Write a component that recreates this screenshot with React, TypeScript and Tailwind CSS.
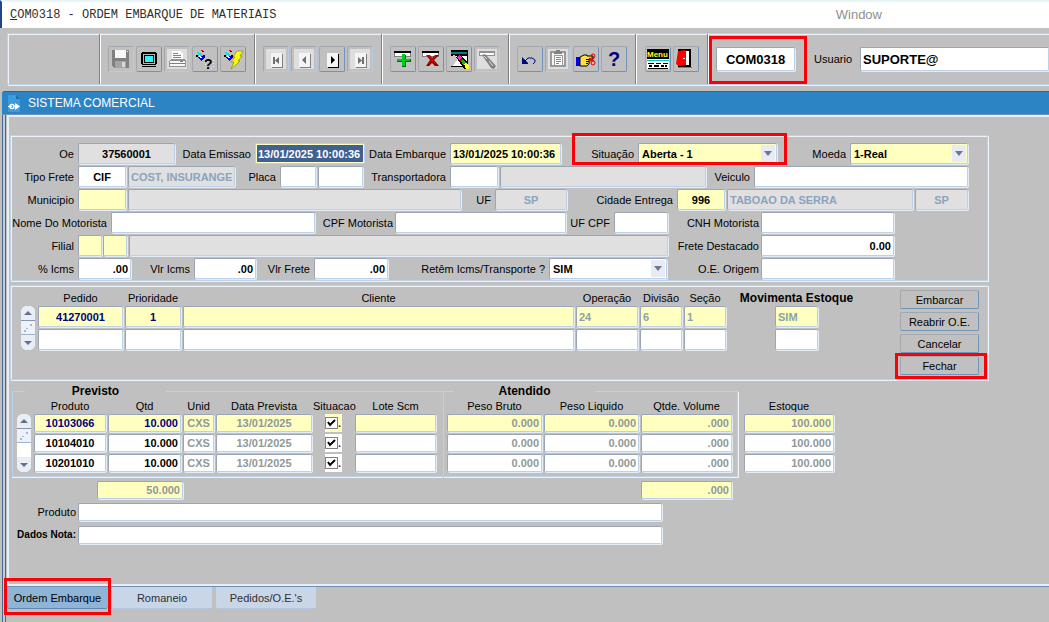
import { InputHTMLAttributes, ReactNode } from 'react';
import clsx from 'clsx';

const FIELD_BORDER =
  'border border-t-[#9ba5b3] border-l-[#9ba5b3] border-r-[#bcd0e8] border-b-[#bcd0e8] rounded-[2px] shadow-[1px_1px_0_#e4edf7]';

const PANEL_BORDER = 'border border-[#bcd0e8] shadow-[inset_1px_1px_0_#edf3fa,1px_1px_0_#edf3fa]';

type Tone = 'white' | 'yellow' | 'gray';

const tones: Record<Tone, string> = {
  white: 'bg-white',
  yellow: 'bg-[#ffffc0]',
  gray: 'bg-[#e0e0e0]',
};

interface FieldProps extends InputHTMLAttributes<HTMLInputElement> {
  tone?: Tone;
  short?: boolean;
}

function Field({ tone = 'white', short, className, ...props }: FieldProps) {
  return (
    <input
      type="text"
      className={clsx(
        'min-w-0 px-[2px] font-bold outline-none',
        short ? 'h-[18px]' : 'h-[21px]',
        FIELD_BORDER,
        tones[tone],
        className,
      )}
      {...props}
    />
  );
}

function Label({ htmlFor, className, children }: { htmlFor: string; className: string; children: ReactNode }) {
  return (
    <label htmlFor={htmlFor} className={clsx('shrink-0 pr-1 text-right whitespace-nowrap', className)}>
      {children}
    </label>
  );
}

interface SelectProps {
  id: string;
  options: string[];
  tone?: Tone;
  className: string;
}

function Select({ id, options, tone = 'white', className }: SelectProps) {
  return (
    <div className={clsx('relative shrink-0', className)}>
      <select
        id={id}
        className={clsx('h-[21px] w-full appearance-none px-[3px] font-bold outline-none', FIELD_BORDER, tones[tone])}
      >
        {options.map((option) => (
          <option key={option}>{option}</option>
        ))}
      </select>
      <span className="pointer-events-none absolute top-[2px] right-[2px] bottom-[2px] flex w-[14px] items-center justify-center bg-[#e8ebf4]">
        <svg width="8" height="5" viewBox="0 0 8 5">
          <path d="M0 0h8L4 5z" fill="#6b7894" />
        </svg>
      </span>
    </div>
  );
}

// Red frame that marks a control for the reader
function Highlight({ className }: { className: string }) {
  return <span className={clsx('pointer-events-none absolute z-10 border-[3px] border-[#fb0007]', className)} />;
}

function Scroller({ label, className }: { label: string; className: string }) {
  return (
    <div className={clsx('flex w-[14px] shrink-0 flex-col overflow-hidden rounded-[6px] bg-white', className)}>
      <button aria-label={`${label}: anterior`} className="flex h-[15px] items-center justify-center border-b border-[#8795a8] bg-[#e8eef6]">
        <svg width="8" height="4" viewBox="0 0 8 4">
          <path d="M4 0l4 4H0z" fill="#6b6f85" />
        </svg>
      </button>
      <span className="flex h-[14px] items-center justify-center border-b border-[#9fb2c8] bg-[#eef2f8]">
        <svg width="10" height="10" viewBox="0 0 10 10">
          <path d="M1 7h2v2H1zM3 5h2v1H3zM7 1h2v2H7z" fill="#9fb9d6" />
        </svg>
      </span>
      <button aria-label={`${label}: proximo`} className="mt-auto flex h-[15px] items-center justify-center bg-[#e8eef6]">
        <svg width="8" height="4" viewBox="0 0 8 4">
          <path d="M0 0h8L4 4z" fill="#6b6f85" />
        </svg>
      </button>
    </div>
  );
}

function ToolButton({ label, disabled, children }: { label: string; disabled?: boolean; children: ReactNode }) {
  return (
    <button
      aria-label={label}
      title={label}
      className={clsx(
        'h-[26px] w-[26px] shrink-0 rounded-[2px] border border-t-[#a4a7ab] border-l-[#a4a7ab]',
        disabled ? 'border-r-[#b8cbe2] border-b-[#b8cbe2]' : 'border-r-[#6f93b9] border-b-[#6f93b9]',
      )}
    >
      <svg width="24" height="24" viewBox="0 0 24 24" shapeRendering="crispEdges">
        {children}
      </svg>
    </button>
  );
}

function ToolGroup({ className, children }: { className: string; children?: ReactNode }) {
  return (
    <div
      className={clsx(
        'mr-px flex shrink-0 items-center gap-[2px] border-r border-r-[#808080] shadow-[1px_0_0_#fff]',
        className,
      )}
    >
      {children}
    </div>
  );
}

function Page({ glyph, disabled }: { glyph: string; disabled?: boolean }) {
  return (
    <>
      {disabled && <rect x="2" y="2" width="20" height="20" fill="#dedede" />}
      <path d="M8 7h11v14H8z" fill={disabled ? '#808080' : '#000'} />
      <path d="M7 6h11v14H7z" fill="#f4f4f4" />
      <path d={glyph} fill={disabled ? '#707070' : '#000'} shapeRendering="auto" />
    </>
  );
}

function List() {
  return (
    <>
      <path d="M3 4h17v6H3z" fill="#808080" />
      <path d="M3 4h17v2H3z" fill="#000" />
      <path d="M4 6h15v3H4z" fill="#fff" />
    </>
  );
}

function Flashlight() {
  return (
    <>
      <path d="M4 5l3 1 3 3-4 1z" fill="#00e5e5" />
      <path d="M5 10l6-2 1 3-4 3z" fill="#0000ff" />
      <path d="M9 4h2v1H9zM3 8h2v2H3z" fill="#000" />
      <path d="M8 3h2v1H8z" fill="#f00" />
      <path d="M10 8h2v3h-2z" fill="#000080" />
      <path d="M6 8h1v1h1v1h1v1H7v-1H6z" fill="#fff" />
    </>
  );
}

const pedidos = [
  { pedido: '41270001', prioridade: '1', operacao: '24', divisao: '6', secao: '1', estoque: 'SIM' },
  { pedido: '', prioridade: '', operacao: '', divisao: '', secao: '', estoque: '' },
];

const produtos = ['10103066', '10104010', '10201010'];

const acoes = ['Embarcar', 'Reabrir O.E.', 'Cancelar', 'Fechar'];

const rowTone = (index: number): Tone => (index === 0 ? 'yellow' : 'white');

function Toolbar() {
  return (
    <div className={clsx('ml-[5px] flex h-[52px] items-stretch border-r-0', PANEL_BORDER)}>
      <ToolGroup className="w-[92px]" />
      <ToolGroup className="pr-2 pl-[7px]">
        <ToolButton label="Salvar" disabled>
          <path d="M3 3h17v18H5l-2-2z" fill="#808080" />
          <path d="M6 3h11v8H6z" fill="#f8f8f8" />
          <path d="M18 4h1v1h-1z" fill="#fff" />
          <path d="M6 14h11v7H6z" fill="#a4a4a4" />
          <path d="M13 15h3v5h-3z" fill="#d8d8d8" />
        </ToolButton>
        <ToolButton label="Imprimir tela">
          <path d="M5 5h14v1h1v11h-1v1H5v-1H4V6h1z" fill="#000" />
          <path d="M6 7h12v10H6z" fill="#b8b8b8" />
          <path d="M7 8h10v8H7z" fill="#000" />
          <path d="M8 9h8v6H8z" fill="#35f0f0" />
          <path d="M5 19h14v1H5z" fill="#000" />
        </ToolButton>
        <ToolButton label="Imprimir" disabled>
          <rect x="2" y="2" width="20" height="20" fill="#dedede" />
          <path d="M7 4h8l3 3v6H7z" fill="#fff" />
          <path d="M8 6h5v1H8zM8 8h8v1H8zM8 10h8v1H8z" fill="#808080" />
          <path d="M4 14l2-2h13l2 2v6H4z" fill="#909090" />
          <path d="M5 14h15v5H5z" fill="#f8f8f8" />
          <path d="M5 16h15v1H5zM15 14h3v1h-3z" fill="#808080" />
        </ToolButton>
        <ToolButton label="Entrar consulta">
          <path
            d="M14 14h1v1h-1zM17 12h1v1h-1zM20 13h1v1h-1zM20 16h1v1h-1zM12 17h1v1h-1zM20 19h1v1h-1zM13 20h1v1h-1zM18 21h1v1h-1zM11 14h1v1h-1z"
            fill="#ffff00"
          />
          <Flashlight />
          <text x="11" y="22" fontSize="14" fontWeight="bold" fontFamily="Liberation Sans, sans-serif">
            ?
          </text>
        </ToolButton>
        <ToolButton label="Executar consulta">
          <Flashlight />
          <path d="M16 4h6l-3 5h2l-4 5h2l-9 8 3-7h-3l4-5h-2z" fill="#ffff00" stroke="#777700" strokeWidth="0.6" shapeRendering="auto" />
        </ToolButton>
      </ToolGroup>
      <ToolGroup className="pr-2 pl-[7px]">
        <ToolButton label="Primeiro registro" disabled>
          <Page disabled glyph="M9 10h2v7H9zM15 10v7l-4-3.500z" />
        </ToolButton>
        <ToolButton label="Registro anterior" disabled>
          <Page disabled glyph="M14 9v8l-4-4z" />
        </ToolButton>
        <ToolButton label="Proximo registro">
          <Page glyph="M11 9v8l4-4z" />
        </ToolButton>
        <ToolButton label="Ultimo registro" disabled>
          <Page disabled glyph="M14 10h2v7h-2zM10 10v7l4-3.500z" />
        </ToolButton>
      </ToolGroup>
      <ToolGroup className="pr-2 pl-[7px]">
        <ToolButton label="Inserir registro">
          <List />
          <path d="M11 8h4v4h5v3h-5v5h-4v-5H6v-3h5z" fill="#006400" />
          <path d="M11 7h3v5h5v2h-5v5h-3v-5H6v-2h5z" fill="#00c81e" />
        </ToolButton>
        <ToolButton label="Excluir registro">
          <List />
          <path d="M7 8h4l2 3 3-3h4l-5 5 5 6h-4l-3-3-3 3H7l4-6z" fill="#7a0000" shapeRendering="auto" />
          <path d="M8 8h2l3 4 4-4h1l-4 5 4 5h-1l-4-4-4 4H8l4-5z" fill="#e00000" shapeRendering="auto" />
        </ToolButton>
        <ToolButton label="Limpar registro">
          <path d="M4 3h17v17H4z" fill="#000" />
          <path d="M4 5h16v2H4z" fill="#008080" />
          <path d="M4 9h16v10H4z" fill="#fff" />
          <path d="M3 9l5-1 3 4-5 7H3z" fill="#c8c8c8" />
          <path d="M9 10l4-3 8 9v6h-4z" fill="#000" />
          <path d="M10 10l3-2 2 3-3 2z" fill="#f030c0" />
          <path d="M12 13l2-2 2 2-2 2z" fill="#e00000" />
          <path d="M14 14l2-2 3 4-3 2z" fill="#00c000" />
          <path d="M17 17l2-1 3 2v4h-3z" fill="#ffff20" />
        </ToolButton>
        <ToolButton label="Cancelar consulta" disabled>
          <rect x="2" y="2" width="20" height="20" fill="#dedede" />
          <path d="M4 4h16v5H4z" fill="#909090" />
          <path d="M5 6h14v2H5z" fill="#fff" />
          <path d="M7 8l3-1 11 12-2 3-3-1z" fill="#808080" shapeRendering="auto" />
          <path d="M9 9l3 3M14 14l4 5" stroke="#e4e4e4" fill="none" shapeRendering="auto" />
        </ToolButton>
      </ToolGroup>
      <ToolGroup className="pr-2 pl-[7px]">
        <ToolButton label="Desfazer">
          <path d="M4 10l6 6v1H4z" fill="#000080" shapeRendering="auto" />
          <path d="M7 14l3-3h4l3 2v2l-2 2" fill="none" stroke="#000080" shapeRendering="auto" />
        </ToolButton>
        <ToolButton label="Colar" disabled>
          <rect x="2" y="2" width="20" height="20" fill="#dedede" />
          <path d="M5 5h14v14H5z" fill="#f4f4f4" stroke="#808080" strokeWidth="1.500" shapeRendering="auto" />
          <path d="M8 5h2V3h4v2h2v2H8z" fill="#808080" />
          <path d="M8 8h8v10H8z" fill="#fff" stroke="#999" />
          <path d="M10 10h5v1h-5zM10 12h5v1h-5zM10 14h5v1h-5zM10 16h3v1h-3z" fill="#808080" />
        </ToolButton>
        <ToolButton label="Recortar">
          <path d="M2 10h4v9H2z" fill="#0000e0" />
          <path d="M6 10l4-2h3v1h6v3h-4v5l-2 2H6z" fill="#ffe04a" stroke="#000" shapeRendering="auto" />
          <path d="M12 12h3M12 14h3M12 16h2" stroke="#000" />
          <path d="M15 11l5 3M15 15l5-4" stroke="#e00000" strokeWidth="1.200" shapeRendering="auto" />
          <circle cx="19" cy="9" r="2" fill="none" stroke="#e00000" shapeRendering="auto" />
          <circle cx="19" cy="16" r="2" fill="none" stroke="#e00000" shapeRendering="auto" />
        </ToolButton>
        <ToolButton label="Ajuda">
          <text x="6" y="19" fontSize="20" fontWeight="bold" fill="#000080" fontFamily="Liberation Sans, sans-serif">
            ?
          </text>
        </ToolButton>
      </ToolGroup>
      <ToolGroup className="px-2">
        <ToolButton label="Menu">
          <path d="M1 2h22v20H1z" fill="#000" />
          <text x="1" y="10" fontSize="8" fontWeight="bold" fill="#ffff20" fontFamily="Liberation Sans, sans-serif">
            Menu
          </text>
          <path d="M1 12h22v10H1z" fill="#fff" />
          <path d="M1 13h22v1H1z" fill="#00c8c8" />
          <path d="M2 16h6v1H2zM10 16h5v1h-5zM17 16h5v1h-5zM3 18h3v2H3zM8 18h5v2H8zM15 18h3v2h-3zM19 18h2v2h-2zM2 21h20v1H2z" fill="#000" />
        </ToolButton>
        <ToolButton label="Sair">
          <path d="M4 2h13v18H4z" fill="#000" />
          <path d="M11 4h4v14h-4z" fill="#fff" />
          <path d="M4 4l8-1v15l-7 1-3-2z" fill="#ff0000" shapeRendering="auto" />
          <path d="M9 11h2v1H9z" fill="#fff" />
          <path d="M4 20h14v1H4z" fill="#808080" />
        </ToolButton>
      </ToolGroup>
      <div className="flex flex-1 items-center pl-[7px]">
        <div className="relative">
          <input
            type="text"
            aria-label="Programa"
            defaultValue="COM0318"
            className={clsx('block h-[24px] w-[79px] bg-white text-center text-[13px] font-bold outline-none', FIELD_BORDER)}
          />
          <Highlight className="-top-[11px] -right-3 -bottom-[13px] -left-[7px]" />
        </div>
        <Label htmlFor="usuario" className="w-[65px] pr-2">
          Usuario
        </Label>
        <input
          id="usuario"
          type="text"
          defaultValue="SUPORTE@"
          className={clsx('h-[24px] min-w-0 flex-1 bg-white px-[2px] text-[13px] font-bold outline-none', FIELD_BORDER)}
        />
      </div>
    </div>
  );
}

function OrderForm() {
  return (
    <section className={clsx('flex w-full max-w-[978px] flex-col gap-[2px] pt-[7px] pr-[19px] pb-px', PANEL_BORDER)}>
      <div className="flex items-center">
        <Label htmlFor="oe" className="w-[67px]">Oe</Label>
        <Field id="oe" tone="gray" defaultValue="37560001" className="w-[97px] text-center" />
        <Label htmlFor="emissao" className="w-[80px]">Data Emissao</Label>
        <input
          id="emissao"
          type="text"
          defaultValue="13/01/2025 10:00:36"
          className="h-[21px] w-[110px] border border-[#bcd0e8] bg-[#3f6090] px-[2px] font-bold text-white shadow-[inset_0_0_0_1px_#ffffc0] outline-none"
        />
        <Label htmlFor="embarque" className="w-[85px]">Data Embarque</Label>
        <Field id="embarque" tone="yellow" defaultValue="13/01/2025 10:00:36" className="w-[111px]" />
        <div className="relative flex items-center">
          <Label htmlFor="situacao" className="w-[77px]">Situação</Label>
          <Select id="situacao" tone="yellow" options={['Aberta - 1']} className="w-[139px]" />
          <Highlight className="-top-[10px] -right-[10px] -bottom-px left-[11px]" />
        </div>
        <Label htmlFor="moeda" className="w-[73px]">Moeda</Label>
        <Select id="moeda" tone="yellow" options={['1-Real']} className="w-[118px]" />
      </div>
      <div className="flex items-center">
        <Label htmlFor="tipo" className="w-[67px]">Tipo Frete</Label>
        <Field id="tipo" defaultValue="CIF" className="w-[48px] text-center" />
        <Field aria-label="Descrição do frete" tone="gray" defaultValue="COST, INSURANGE" className="ml-[2px] w-[107px] text-[#8ba3bf]" />
        <Label htmlFor="placa" className="w-[45px]">Placa</Label>
        <Field id="placa" className="w-[36px]" />
        <Field aria-label="UF da placa" className="ml-[2px] w-[45px]" />
        <Label htmlFor="transportadora" className="w-[87px]">Transportadora</Label>
        <Field id="transportadora" className="w-[48px]" />
        <Field aria-label="Nome da transportadora" tone="gray" className="ml-[2px] flex-1" />
        <Label htmlFor="veiculo" className="w-[48px]">Veiculo</Label>
        <Field id="veiculo" className="w-[214px]" />
      </div>
      <div className="flex items-center">
        <Label htmlFor="municipio" className="w-[67px]">Municipio</Label>
        <Field id="municipio" tone="yellow" className="w-[48px]" />
        <Field aria-label="Nome do municipio" tone="gray" className="ml-[2px] flex-1" />
        <Label htmlFor="uf" className="w-[34px]">UF</Label>
        <Field id="uf" tone="gray" defaultValue="SP" className="w-[72px] text-center text-[#8ba3bf]" />
        <Label htmlFor="cidade" className="w-[110px]">Cidade Entrega</Label>
        <Field id="cidade" tone="yellow" defaultValue="996" className="w-[48px] text-center" />
        <Field aria-label="Nome da cidade" tone="gray" defaultValue="TABOAO DA SERRA" className="ml-[2px] w-[186px] text-[#8ba3bf]" />
        <Field aria-label="UF da cidade" tone="gray" defaultValue="SP" className="ml-[2px] w-[53px] text-center text-[#8ba3bf]" />
      </div>
      <div className="flex flex-col gap-[2px] pr-[74px]">
        <div className="flex items-center">
          <Label htmlFor="motorista" className="w-[100px]">Nome Do Motorista</Label>
          <Field id="motorista" className="flex-1" />
          <Label htmlFor="cpf" className="w-[80px] pr-[2px]">CPF Motorista</Label>
          <Field id="cpf" className="w-[171px]" />
          <Label htmlFor="ufcpf" className="w-[48px]">UF CPF</Label>
          <Field id="ufcpf" className="w-[54px]" />
          <Label htmlFor="cnh" className="w-[93px] pr-[2px]">CNH Motorista</Label>
          <Field id="cnh" className="w-[133px]" />
        </div>
        <div className="flex items-center">
          <Label htmlFor="filial" className="w-[67px]">Filial</Label>
          <Field id="filial" tone="yellow" className="w-[24px]" />
          <Field aria-label="Subfilial" tone="yellow" className="ml-px w-[24px]" />
          <Field aria-label="Nome da filial" tone="gray" className="ml-[2px] flex-1" />
          <Label htmlFor="destacado" className="w-[93px] pr-[2px]">Frete Destacado</Label>
          <Field id="destacado" defaultValue="0.00" className="w-[133px] text-right" />
        </div>
        <div className="flex items-center">
          <Label htmlFor="icms" className="w-[67px]">% Icms</Label>
          <Field id="icms" defaultValue=".00" className="w-[53px] text-right" />
          <Label htmlFor="vlricms" className="w-[63px]">Vlr Icms</Label>
          <Field id="vlricms" defaultValue=".00" className="w-[62px] text-right" />
          <Label htmlFor="vlrfrete" className="w-[58px]">Vlr Frete</Label>
          <Field id="vlrfrete" defaultValue=".00" className="w-[74px] text-right" />
          <Label htmlFor="retem" className="w-[161px]">Retêm Icms/Transporte ?</Label>
          <Select id="retem" options={['SIM']} className="w-[118px]" />
          <Label htmlFor="origem" className="ml-auto w-[93px] pr-[2px]">O.E. Origem</Label>
          <Field id="origem" className="w-[133px]" />
        </div>
      </div>
    </section>
  );
}

function Orders() {
  return (
    <section className={clsx('mt-1 flex h-[95px] w-full max-w-[978px] items-start pr-2 pl-[10px]', PANEL_BORDER)}>
      <Scroller label="Pedidos" className="mt-[20px] h-[44px]" />
      <table className="mt-[4px] ml-[2px] flex-1 table-fixed border-collapse">
        <colgroup>
          <col className="w-[87px]" />
          <col className="w-[58px]" />
          <col />
          <col className="w-[64px]" />
          <col className="w-[44px]" />
          <col className="w-[44px]" />
          <col className="w-[139px]" />
        </colgroup>
        <thead>
          <tr className="h-[16px]">
            <th className="font-normal">Pedido</th>
            <th className="font-normal">Prioridade</th>
            <th className="font-normal">Cliente</th>
            <th className="font-normal">Operação</th>
            <th className="font-normal">Divisão</th>
            <th className="font-normal">Seção</th>
            <th className="text-[12px] font-bold whitespace-nowrap">Movimenta Estoque</th>
          </tr>
        </thead>
        <tbody>
          {pedidos.map((row, i) => (
            <tr key={i}>
              <td className="px-px pb-[2px]">
                <Field aria-label="Pedido" tone={rowTone(i)} defaultValue={row.pedido} className="block w-full text-center text-[#000080]" />
              </td>
              <td className="px-px pb-[2px]">
                <Field aria-label="Prioridade" tone={rowTone(i)} defaultValue={row.prioridade} className="block w-full text-center text-[#000080]" />
              </td>
              <td className="px-px pb-[2px]">
                <Field aria-label="Cliente" tone={rowTone(i)} className="block w-full" />
              </td>
              <td className="px-px pb-[2px]">
                <Field aria-label="Operação" tone={rowTone(i)} defaultValue={row.operacao} className="block w-full text-[#8ba3a8]" />
              </td>
              <td className="px-px pb-[2px]">
                <Field aria-label="Divisão" tone={rowTone(i)} defaultValue={row.divisao} className="block w-full text-[#8ba3a8]" />
              </td>
              <td className="px-px pb-[2px]">
                <Field aria-label="Seção" tone={rowTone(i)} defaultValue={row.secao} className="block w-full text-[#8ba3a8]" />
              </td>
              <td className="px-px pb-[2px]">
                <Field aria-label="Movimenta Estoque" tone={rowTone(i)} defaultValue={row.estoque} className="mx-auto block w-[43px] text-[#8ba3a8]" />
              </td>
            </tr>
          ))}
        </tbody>
      </table>
      <div className="mt-[4px] ml-[34px] flex w-[79px] flex-col gap-[3px]">
        {acoes.map((acao) => (
          <div key={acao} className="relative">
            <button className="block h-[19px] w-full rounded-[2px] border border-t-[#a4a7ab] border-r-[#6f93b9] border-b-[#6f93b9] border-l-[#a4a7ab]">
              {acao}
            </button>
            {acao === 'Fechar' && <Highlight className="-top-[3px] -right-2 -bottom-1 -left-[5px]" />}
          </div>
        ))}
      </div>
    </section>
  );
}

// The legend's own text-align would move the whole legend, so the text is centred in a block inside
function GroupTitle({ children }: { children: ReactNode }) {
  return (
    <legend className="ml-2 text-[12px] leading-[14px] font-bold">
      <span className="block w-[141px] text-center">{children}</span>
    </legend>
  );
}

function Products() {
  return (
    <div className="mt-1 ml-[2px] flex items-start">
      <fieldset className="h-[93px] min-w-0 border border-r-0 border-[#bcd0e8] pr-[6px] pl-1 shadow-[0_1px_0_#edf3fa]">
        <GroupTitle>Previsto</GroupTitle>
        <div className="flex items-start">
          <Scroller label="Produtos" className="mt-[16px] h-[58px]" />
          <table className="ml-[2px] w-[404px] table-fixed border-collapse">
            <colgroup>
              <col className="w-[74px]" />
              <col className="w-[75px]" />
              <col className="w-[33px]" />
              <col className="w-[98px]" />
              <col className="w-[41px]" />
              <col className="w-[83px]" />
            </colgroup>
            <thead>
              <tr className="h-[16px] whitespace-nowrap">
                <th className="font-normal">Produto</th>
                <th className="font-normal">Qtd</th>
                <th className="font-normal">Unid</th>
                <th className="font-normal">Data Prevista</th>
                <th className="font-normal">Situacao</th>
                <th className="font-normal">Lote Scm</th>
              </tr>
            </thead>
            <tbody>
              {produtos.map((produto, i) => (
                <tr key={produto}>
                  <td className="px-px pb-[2px]">
                    <Field short aria-label="Produto" tone={rowTone(i)} defaultValue={produto} className={clsx('block w-full text-center', i === 0 && 'text-[#000080]')} />
                  </td>
                  <td className="px-px pb-[2px]">
                    <Field short aria-label="Qtd" tone={rowTone(i)} defaultValue="10.000" className={clsx('block w-full text-right', i === 0 && 'text-[#000080]')} />
                  </td>
                  <td className="px-px pb-[2px]">
                    <Field short aria-label="Unid" tone={rowTone(i)} defaultValue="CXS" className="block w-full text-center text-[#909898]" />
                  </td>
                  <td className="px-px pb-[2px]">
                    <Field short aria-label="Data Prevista" tone={rowTone(i)} defaultValue="13/01/2025" className="block w-full text-center text-[#909898]" />
                  </td>
                  <td className="px-px pb-[2px]">
                    <span className={clsx('relative mx-auto flex h-[18px] w-[17px] items-center', tones[rowTone(i)])}>
                      <input
                        type="checkbox"
                        aria-label="Situacao"
                        defaultChecked
                        className="peer h-[12px] w-[13px] appearance-none border border-[#808080] bg-white"
                      />
                      <svg className="pointer-events-none absolute left-[2px] hidden peer-checked:block" width="9" height="8" viewBox="0 0 9 8">
                        <path d="M1 3l2 3 5-5" fill="none" stroke="#000" strokeWidth="2" />
                      </svg>
                      <span className="font-bold text-[#800080]">.</span>
                    </span>
                  </td>
                  <td className="px-px pb-[2px]">
                    <Field short aria-label="Lote Scm" tone={rowTone(i)} className="block w-full" />
                  </td>
                </tr>
              ))}
            </tbody>
          </table>
        </div>
      </fieldset>
      <fieldset className="h-[93px] min-w-0 border border-[#bcd0e8] pr-1 pl-[2px] shadow-[1px_1px_0_#edf3fa]">
        <GroupTitle>Atendido</GroupTitle>
        <table className="w-[287px] table-fixed border-collapse">
          <colgroup>
            <col className="w-[97px]" />
            <col className="w-[97px]" />
            <col className="w-[93px]" />
          </colgroup>
          <thead>
            <tr className="h-[16px]">
              <th className="font-normal">Peso Bruto</th>
              <th className="font-normal">Peso Liquido</th>
              <th className="font-normal">Qtde. Volume</th>
            </tr>
          </thead>
          <tbody>
            {produtos.map((produto, i) => (
              <tr key={produto}>
                <td className="px-px pb-[2px]">
                  <Field short aria-label="Peso Bruto" tone={rowTone(i)} defaultValue="0.000" className="block w-full text-right text-[#909898]" />
                </td>
                <td className="px-px pb-[2px]">
                  <Field short aria-label="Peso Liquido" tone={rowTone(i)} defaultValue="0.000" className="block w-full text-right text-[#909898]" />
                </td>
                <td className="px-px pb-[2px]">
                  <Field short aria-label="Qtde. Volume" tone={rowTone(i)} defaultValue=".000" className="block w-full text-right text-[#909898]" />
                </td>
              </tr>
            ))}
          </tbody>
        </table>
      </fieldset>
      <table className="mt-[14px] ml-[5px] w-[92px] table-fixed border-collapse">
        <thead>
          <tr className="h-[16px]">
            <th className="font-normal">Estoque</th>
          </tr>
        </thead>
        <tbody>
          {produtos.map((produto, i) => (
            <tr key={produto}>
              <td className="px-px pb-[2px]">
                <Field short aria-label="Estoque" tone={rowTone(i)} defaultValue="100.000" className="block w-full text-right text-[#909898]" />
              </td>
            </tr>
          ))}
        </tbody>
      </table>
    </div>
  );
}

export default function App() {
  return (
    <div className="flex min-h-screen flex-col bg-[#c0c0c0] font-['Liberation_Sans',Arial,sans-serif] text-[11px] leading-[14px] text-black">
      <header className="flex h-[28px] shrink-0 items-center border-t-2 border-l-2 border-t-[#e6f5f7] border-l-[#1f4788] bg-white pl-2">
        <h1 className="flex-1 font-['Liberation_Mono','Courier_New',monospace] text-[12px] text-[#303030]">
          <span className="underline">C</span>OM0318 - ORDEM EMBARQUE DE MATERIAIS
        </h1>
        <button className="mr-[167px] text-[13px] text-[#909090]">Window</button>
      </header>

      <div className="flex flex-1 flex-col pt-[5px] pl-[2px]">
        <Toolbar />

        <main className="mt-[6px] flex flex-1 flex-col">
          <div className="flex h-[24px] shrink-0 items-center gap-[7px] rounded-tl-[3px] border-t border-b border-t-[#35618f] border-b-[#6d94bb] bg-[#2c84c5] pl-[5px]">
            <svg width="14" height="17" viewBox="0 0 14 17">
              <path d="M1 0h8l4 4v13H1z" fill="#3d9bdc" />
              <path d="M9 0l4 4H9z" fill="#1e6da8" />
              <path d="M8 8l5 3.500L8 15z" fill="#fff" />
              <circle cx="5" cy="11.500" r="2" fill="none" stroke="#fff" strokeWidth="1.500" />
              <path d="M1 11.500h4" stroke="#fff" />
            </svg>
            <h2 className="text-[12px] text-white">SISTEMA COMERCIAL</h2>
          </div>

          <div className="flex flex-1 flex-col border-l border-[#47688f] bg-[#c4cad4] pl-[2px]">
            <div className="flex flex-1 flex-col border-l border-[#47688f] bg-[#c0c0c0] pl-px">
              <div className="border-t-2 border-b-2 border-l-2 border-[#e8eef5] pt-[18px] pb-[40px] pl-px">
                <OrderForm />
                <Orders />
                <Products />
                <div className="mt-[4px] flex pl-[87px]">
                  <Field short aria-label="Total Qtd" tone="yellow" defaultValue="50.000" className="w-[86px] text-right text-[#909898]" />
                  <Field short aria-label="Total Volume" tone="yellow" defaultValue=".000" className="ml-[458px] w-[91px] text-right text-[#909898]" />
                </div>
                <div className="mt-[4px] flex max-w-[652px] items-center">
                  <Label htmlFor="produto" className="w-[68px] pr-[2px]">Produto</Label>
                  <Field short id="produto" className="flex-1" />
                </div>
                <div className="mt-[5px] flex max-w-[652px] items-center">
                  <Label htmlFor="nota" className="w-[68px] pr-[2px] text-[10px] font-bold">Dados Nota:</Label>
                  <Field short id="nota" className="flex-1" />
                </div>
              </div>
              <nav className="flex gap-1 border-t border-[#6d8fb3]">
                <div className="relative">
                  <button className="h-[22px] w-[101px] rounded-b-[3px] border-b border-[#5f86ae] bg-[#8fb4d6]">Ordem Embarque</button>
                  <Highlight className="-top-[9px] -right-[3px] -bottom-[6px] -left-[3px]" />
                </div>
                <button className="h-[22px] w-[100px] rounded-b-[3px] border-b border-[#b3c8e0] bg-[#c9d6e8] text-[#303030]">Romaneio</button>
                <button className="h-[22px] w-[100px] rounded-b-[3px] border-b border-[#b3c8e0] bg-[#c9d6e8] text-[#303030]">Pedidos/O.E.&apos;s</button>
              </nav>
            </div>
          </div>
        </main>
      </div>
    </div>
  );
}
